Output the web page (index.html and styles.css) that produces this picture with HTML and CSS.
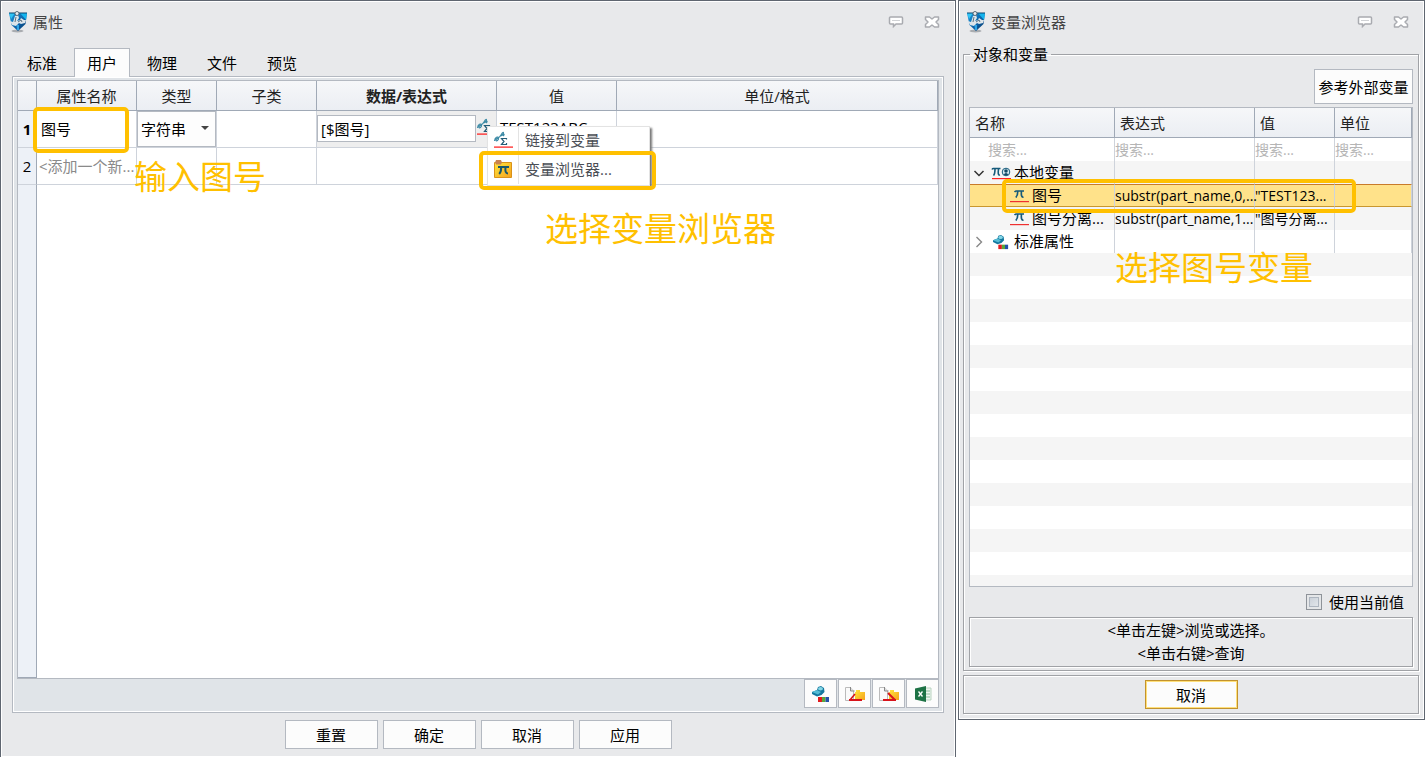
FILE: index.html
```html
<!DOCTYPE html>
<html lang="zh-CN">
<head>
<meta charset="utf-8">
<title>属性</title>
<link rel="stylesheet" href="styles.css">
</head>
<body>
<svg class="sprite" width="0" height="0" aria-hidden="true">
  <defs>
    <linearGradient id="blue" x1="0" y1="0" x2="1" y2="1">
      <stop offset="0" stop-color="#1d9be0"/><stop offset=".6" stop-color="#0b5fa5"/><stop offset="1" stop-color="#0a2f57"/>
    </linearGradient>
    <linearGradient id="gold" x1="0" y1="0" x2="1" y2="1">
      <stop offset="0" stop-color="#ffe63c"/><stop offset="1" stop-color="#f5a21c"/>
    </linearGradient>
    <symbol id="app" viewBox="0 0 20 22">
      <ellipse cx="9.500" cy="20" rx="6" ry="1.500" fill="#a9acb0"/>
      <path d="M1 2h18l-1.500 11L10 20 3.500 14z" fill="url(#blue)"/>
      <path d="M1 2h6L3 8z" fill="#2fc4f5"/><path d="M12 2h7l-1 7z" fill="#12b4ee"/>
      <path d="M1 2h18" fill="none" stroke="#0a4673" stroke-width="1"/>
      <path d="M7 5l3-1 1 3-2 3 3-1 1-2 3 2h2l-1 3-4 1-2-1-3 3-4-1-2-4 3 1z" fill="#dde5ea"/>
      <path d="M8 6l-1 5M10 11l3-2 1 2" fill="none" stroke="#5d7382" stroke-width="1"/>
      <circle cx="9" cy="2.500" r="2" fill="#e7ecef" stroke="#5b6b77"/>
      <path d="M8.500 14h2.500v5H9z" fill="#2fa5e6"/>
    </symbol>
    <symbol id="bubble" viewBox="0 0 16 12">
      <path d="M2.500 1h11a1 1 0 0 1 1 1v5a1 1 0 0 1-1 1H8L5.500 10.500V8h-3a1 1 0 0 1-1-1V2a1 1 0 0 1 1-1z" fill="#fff" stroke="#a9abb0" stroke-width="1.500"/>
      <path d="M4 4.500h8" stroke="#d0d2d5"/>
    </symbol>
    <symbol id="close" viewBox="0 0 16 12">
      <path d="M1.500 1h4L8 3l2.500-2h4v2.500L12 6l2.500 2.500V11h-4L8 9l-2.500 2h-4V8.500L4 6 1.500 3.500z" fill="#fff" stroke="#a9abb0" stroke-width="1.500" stroke-linejoin="round"/>
    </symbol>
    <symbol id="link" viewBox="0 0 20 18">
      <path d="M1.500 10C2 6 5 5 5.500 7S3 11 3 9s3-1 5-5 3-3 2-1-3 2-1 1 3-1 1 1" fill="none" stroke="#3d8ba6" stroke-width="1.200"/>
      <path d="M13.500 8.500v-1H8.500l2.500 3-2.500 3h5v-1.500" fill="none" stroke="#245d78" stroke-width="1.200"/>
      <path d="M1 15.500h19v1.200H1z" fill="#ff1515"/>
    </symbol>
    <symbol id="browse" viewBox="0 0 20 20">
      <path d="M1.500 3.500h17v15h-17z" fill="url(#gold)" stroke="#d9921a"/>
      <path d="M3 1h5l1 2.500-1 2H3l-1-2z" fill="#c9834e"/>
      <path d="M5 8h11M8.200 8c0 4-.5 5.500-2 7M12.500 8c-.4 4 0 6.500 2.500 6.500" fill="none" stroke="#17576b" stroke-width="2"/>
    </symbol>
    <symbol id="pi" viewBox="0 0 20 16">
      <path d="M5.500 4q1-1 2-1h7.500M8.800 3c0 4-.5 5-2 6.500M12.500 3c-.5 4 0 6.500 2 6" fill="none" stroke="#155a7a" stroke-width="1.700"/>
      <path d="M1 13h19v1.200H1z" fill="#ee3030"/>
    </symbol>
    <symbol id="piuser" viewBox="0 0 20 16">
      <path d="M1 4.500q.5-1 1.500-1h7M4 4c0 4 0 5-1.500 6.500M7.500 4c-.5 4-.5 6.500 1.500 6" fill="none" stroke="#155a7a" stroke-width="1.600"/>
      <circle cx="15" cy="7" r="3.800" fill="#d9edf2" stroke="#155a7a"/>
      <circle cx="15" cy="6" r="1.800" fill="#124a66"/><path d="M12.500 9.500q2.500-3 5 0l-2.500 1z" fill="#124a66"/>
      <path d="M1 13h19v1.200H1z" fill="#ff2222"/>
    </symbol>
    <symbol id="part" viewBox="0 0 20 18">
      <path d="M1 7l5-2 1-3 3-1 3 2 .5 4-3 3-4.500 1.500L1 9z" fill="#14789f"/>
      <path d="M1 7l5-2 4 2-3 2.500z" fill="#54bbd4"/><ellipse cx="9.500" cy="3.800" rx="2.500" ry="1.800" fill="#86d7e6"/>
      <path d="M7 12h4v5H7z" fill="#e3191c"/><path d="M11 12h3.500v5H11z" fill="#5aa63a"/><path d="M14.500 12H18v5h-3.500z" fill="#2450a8"/>
    </symbol>
    <symbol id="export" viewBox="0 0 22 18">
      <path d="M1.500 2.500h5l3 3v10h-8z" fill="#fafafa" stroke="#bbb"/><path d="M6.500 2v4h4" fill="#ddd" stroke="#888"/>
      <path d="M11 7h1V5h4v2h5v8H11z" fill="url(#gold)"/>
      <path d="M6 15l5-6" fill="none" stroke="#d8131b" stroke-width="1.600"/><path d="M5 14h13v2H5z" fill="#d8131b"/>
    </symbol>
    <symbol id="import" viewBox="0 0 22 18">
      <path d="M1.500 2.500h5l3 3v10h-8z" fill="#fafafa" stroke="#bbb"/><path d="M6.500 2v4h4" fill="#ddd" stroke="#888"/>
      <path d="M11 7h1V5h4v2h5v8H11z" fill="url(#gold)"/>
      <path d="M10 8l7 7" fill="none" stroke="#d8131b" stroke-width="2"/><path d="M5 14h13v2H5z" fill="#d8131b"/>
    </symbol>
    <symbol id="sheet" viewBox="0 0 18 18">
      <path d="M10 3h7v12h-7z" fill="#eef5ef" stroke="#b9d3c0"/><path d="M12 6h4M12 9h4M12 12h4" stroke="#8cbd9b"/>
      <path d="M1 3.500L12 1v16L1 14.500z" fill="#1d7245"/>
      <path d="M4.500 6.500l4 5m0-5l-4 5" stroke="#fff" stroke-width="1.300"/>
    </symbol>
    <symbol id="down" viewBox="0 0 12 12"><path d="M1.500 4L6 8.500 10.500 4" fill="none" stroke="#333" stroke-width="1.500"/></symbol>
    <symbol id="right" viewBox="0 0 12 12"><path d="M3.500 1L8.500 6l-5 5" fill="none" stroke="#888" stroke-width="1.400"/></symbol>
  </defs>
</svg>

<main class="desk">
  <section class="window props">
    <header class="titlebar">
      <svg class="app-icon"><use href="#app"/></svg>
      <h1>属性</h1>
      <button class="win-btn" aria-label="反馈"><svg><use href="#bubble"/></svg></button>
      <button class="win-btn" aria-label="关闭"><svg><use href="#close"/></svg></button>
    </header>
    <nav class="tabs" role="tablist">
      <button class="tab" role="tab">标准</button>
      <button class="tab active" role="tab" aria-selected="true">用户</button>
      <button class="tab" role="tab">物理</button>
      <button class="tab" role="tab">文件</button>
      <button class="tab" role="tab">预览</button>
    </nav>
    <div class="pane">
      <div class="grid-box">
        <table class="grid">
          <colgroup><col class="c-num"><col class="c-100"><col class="c-80"><col class="c-100"><col class="c-180"><col class="c-120"><col></colgroup>
          <thead><tr><th></th><th>属性名称</th><th>类型</th><th>子类</th><th class="strong">数据/表达式</th><th>值</th><th>单位/格式</th></tr></thead>
          <tbody>
            <tr>
              <th class="current">1</th>
              <td><input class="name-input" aria-label="属性名称" value="图号"></td>
              <td><div class="select-box"><select aria-label="类型"><option>字符串</option></select></div></td>
              <td></td>
              <td class="expr"><div class="expr-box"><input aria-label="表达式" value="[$图号]"><svg><use href="#link"/></svg></div></td>
              <td class="value">TEST123ABC</td>
              <td></td>
            </tr>
            <tr><th>2</th><td class="hint">&lt;添加一个新...</td><td></td><td></td><td></td><td></td><td></td></tr>
          </tbody>
        </table>
        <div class="gutter"></div>
      </div>
      <div class="tools">
        <button aria-label="标准属性"><svg><use href="#part"/></svg></button>
        <button aria-label="导出"><svg><use href="#export"/></svg></button>
        <button aria-label="导入"><svg><use href="#import"/></svg></button>
        <button aria-label="表格"><svg><use href="#sheet"/></svg></button>
      </div>
    </div>
    <footer class="actions">
      <button class="btn">重置</button><button class="btn">确定</button><button class="btn">取消</button><button class="btn">应用</button>
    </footer>

    <div class="menu" role="menu">
      <button role="menuitem"><span class="menu-icon"><svg><use href="#link"/></svg></span>链接到变量</button>
      <button role="menuitem"><span class="menu-icon"><svg><use href="#browse"/></svg></span>变量浏览器...</button>
    </div>
    <div class="mark mark-name"></div>
    <div class="mark mark-menu"></div>
    <p class="note note-name">输入图号</p>
    <p class="note note-menu">选择变量浏览器</p>
  </section>

  <section class="window browser">
    <header class="titlebar">
      <svg class="app-icon"><use href="#app"/></svg>
      <h1>变量浏览器</h1>
      <button class="win-btn" aria-label="反馈"><svg><use href="#bubble"/></svg></button>
      <button class="win-btn" aria-label="关闭"><svg><use href="#close"/></svg></button>
    </header>
    <fieldset class="etched objects">
      <legend>对象和变量</legend>
      <div class="objects-body">
        <button class="btn ref-btn">参考外部变量</button>
        <div class="tree-box">
          <table class="tree">
            <colgroup><col class="t-name"><col class="t-expr"><col class="t-val"><col></colgroup>
            <thead><tr><th>名称</th><th>表达式</th><th>值</th><th>单位</th></tr></thead>
            <tbody>
              <tr class="search">
                <td><input class="indent" aria-label="搜索名称" placeholder="搜索..."></td>
                <td><input aria-label="搜索表达式" placeholder="搜索..."></td>
                <td><input aria-label="搜索值" placeholder="搜索..."></td>
                <td><input aria-label="搜索单位" placeholder="搜索..."></td>
              </tr>
              <tr><td><div class="node"><svg class="arrow"><use href="#down"/></svg><svg class="kind"><use href="#piuser"/></svg>本地变量</div></td><td></td><td></td><td></td></tr>
              <tr class="selected"><td><div class="node child"><svg class="kind"><use href="#pi"/></svg>图号</div></td><td>substr(part_name,0,...</td><td>"TEST123...</td><td></td></tr>
              <tr><td><div class="node child"><svg class="kind"><use href="#pi"/></svg>图号分离...</div></td><td>substr(part_name,1...</td><td>"图号分离...</td><td></td></tr>
              <tr><td><div class="node"><svg class="arrow"><use href="#right"/></svg><svg class="kind"><use href="#part"/></svg>标准属性</div></td><td></td><td></td><td></td></tr>
            </tbody>
          </table>
          <div class="stripes"></div>
        </div>
        <label class="check"><input type="checkbox">使用当前值</label>
        <div class="etched tips"><p>&lt;单击左键&gt;浏览或选择。</p><p>&lt;单击右键&gt;查询</p></div>
      </div>
    </fieldset>
    <footer class="etched cancel-bar"><button class="btn focus">取消</button></footer>

    <div class="mark mark-row"></div>
    <p class="note note-row">选择图号变量</p>
  </section>
</main>
</body>
</html>
```

FILE: styles.css
```css
* { box-sizing: border-box; }
body, h1, p, fieldset { margin: 0; }
body {
  background: #fff;
  color: #000;
  font: 15px/22px "Open Sans", "Noto Sans CJK SC", sans-serif;
}
button, input, select { font: inherit; color: inherit; margin: 0; border-radius: 0; }
button { padding: 0; border: 0; background: none; }
svg { display: block; flex: none; }
.sprite { position: absolute; }

.desk {
  display: grid;
  grid-template-columns: minmax(0, 956fr) minmax(0, 467fr);
  gap: 2px;
  height: 100vh;
  min-height: 480px;
  overflow: hidden;
}
.window {
  position: relative;
  display: flex;
  flex-direction: column;
  min-width: 0;
  background: #e8e9eb;
  border: 1px solid #5f6670;
  box-shadow: inset 0 0 0 1px #fff;
}
.props { border-bottom: 0; padding: 0 11px 8px; }
.browser { margin-bottom: 37px; padding: 0 4px 5px; }

.titlebar { display: flex; align-items: center; height: 42px; color: #444; }
.props .titlebar { margin: 0 4px 0 -4px; }
.browser .titlebar { margin: 0 11px 0 3px; }
.titlebar h1 { flex: 1; font-size: 15px; font-weight: 400; }
.app-icon { width: 20px; height: 22px; margin-right: 5px; }
.win-btn { margin-left: 20px; }
.win-btn svg { width: 16px; height: 12px; }

.tabs { display: flex; gap: 4px; padding: 5px 2px 0; }
.tab { width: 56px; height: 28px; border: 1px solid transparent; border-bottom: 0; }
.tab.active { position: relative; z-index: 1; margin-bottom: -1px; height: 29px; background: #fcfcfc; border-color: #b4b9c1; }

.pane {
  flex: 1;
  min-height: 0;
  display: flex;
  flex-direction: column;
  padding: 3px 4px 4px;
  background: #e0e4e8;
  border: 1px solid #b4b9c1;
  box-shadow: inset 0 0 0 1px #fff;
}
.grid-box {
  flex: 1;
  min-height: 0;
  display: flex;
  flex-direction: column;
  background: #fff;
  border: 1px solid #b4b9c1;
}
table { border-spacing: 0; table-layout: fixed; width: 100%; }
th, td { padding: 0; font-weight: 400; white-space: nowrap; }
.c-num { width: 19px; }
.c-80 { width: 80px; }
.c-100 { width: 100px; }
.c-120 { width: 120px; }
.c-180 { width: 180px; }
.grid tr { height: 37px; }
.grid thead tr { height: 30px; }
.grid th, .grid td { overflow: hidden; }
.grid td { border-right: 1px solid #ced3db; border-bottom: 1px solid #ced3db; }
.grid th { color: #000; border-right: 1px solid #a0a9b6; border-bottom: 1px solid #a0a9b6; }
.grid thead th, .tree th { background: linear-gradient(#f6f7f9, #ebeef3); color: #222; }
.grid tbody th { background: #edf1f7; border-bottom-color: #ced3db; }
.grid .strong, .grid .current { font-weight: 700; }
.grid td.hint { padding-left: 2px; color: #8a8a8a; }
.grid td.value { padding: 0 0 4px 3px; }
.gutter { flex: 1; width: 19px; background: #edf1f7; border-right: 1px solid #a0a9b6; border-bottom: 1px solid #a0a9b6; }
.name-input { width: 99px; height: 35px; padding: 0 4px 2px; border: 0; display: block; }
.select-box { position: relative; }
.select-box select { display: block; width: 100%; height: 36px; padding: 0 3px 1px; appearance: none; background: #fdfdfd; border: 1px solid #b4b9c1; }
.select-box::after { content: ""; position: absolute; right: 7px; top: 15px; border: 4px solid transparent; border-top-color: #444; border-bottom: 0; }
.grid td.expr { background: #eee; }
.expr-box { display: flex; align-items: center; padding-bottom: 2px; }
.expr-box input { width: 159px; height: 27px; padding: 0 3px; background: #fff; border: 1px solid #b4b9c1; }
.expr-box svg { width: 20px; height: 18px; margin-bottom: 2px; }

.tools { display: flex; justify-content: flex-end; gap: 1px; }
.tools button { width: 33px; height: 29px; display: grid; place-items: center; background: #fcfcfc; border: 1px solid #b4b9c1; }
.tools svg { width: 22px; height: 18px; }

.btn { width: 93px; height: 29px; background: #fcfcfc; border: 1px solid #b4b9c1; }
.actions { display: flex; justify-content: center; gap: 5px; padding-top: 7px; }

.etched { border: 1px solid #a0a2a6; box-shadow: inset 1px 1px #fff, 1px 1px #fff; }
.objects { flex: 1; min-height: 0; min-width: 0; margin-right: 1px; padding: 0 5px 3px; display: flex; flex-direction: column; }
.objects legend { margin-left: 1px; padding: 0 3px; }
.objects-body { height: 100%; display: flex; flex-direction: column; }
.ref-btn { align-self: flex-end; flex: none; width: 99px; height: 35px; margin: 4px 0 3px; }
.tree-box { flex: 1; min-height: 0; display: flex; flex-direction: column; background: #fff; border: 1px solid #b4b9c1; }
.t-name { width: 145px; }
.t-expr { width: 140px; }
.t-val { width: 80px; }
.tree th { height: 30px; padding-left: 5px; text-align: left; border-right: 1px solid #a0a9b6; border-bottom: 1px solid #a0a9b6; }
.tree td { height: 23px; line-height: 21px; font-size: 14px; border-right: 1px solid #ced3db; }
.tree tbody tr:nth-child(even) { background: #f5f5f5; }
.tree .selected td { background: #ffe28a; border-top: 1px solid #c87a2a; border-bottom: 1px solid #c9972f; }
.tree input { display: block; width: 100%; height: 22px; padding: 0; border: 0; background: none; }
.tree .indent { padding-left: 18px; }
.tree input::placeholder { color: #b5b5b5; opacity: 1; }
.node { display: flex; align-items: center; padding-left: 3px; font-size: 15px; height: 21px; }
.node .arrow { width: 12px; height: 12px; margin-right: 6px; }
.node .kind { width: 20px; height: 16px; margin-right: 3px; }
.node.child { padding-left: 39px; }
.stripes { flex: 1; background: repeating-linear-gradient(#f5f5f5 0 23px, #fff 23px 46px); }
.check { display: flex; align-items: center; gap: 7px; align-self: flex-end; height: 30px; padding-right: 9px; }
.check input { appearance: none; width: 16px; height: 16px; background: linear-gradient(135deg, #c3cad3, #e9edf0); border: 1px solid #8e9399; box-shadow: inset 0 0 0 2px #e4e6e8, inset 0 0 0 3px #adb5bf; }
.tips { padding: 1px 0; text-align: center; line-height: 23px; }
.cancel-bar { display: flex; justify-content: center; margin: 4px 1px 0 0; padding: 4px; }
.focus { border-color: #c2922e; box-shadow: inset 0 0 0 1px #ffe07a; }

.menu { position: absolute; left: 486px; top: 125px; width: 163px; background: #fff; border: 1px solid #e3e3e3; box-shadow: 2px 2px 2px #777; }
.menu button { display: flex; align-items: center; width: 100%; height: 29px; padding-bottom: 3px; color: #4a4e55; }
.menu-icon { display: flex; align-items: center; width: 31px; height: 29px; padding-left: 5px; margin-right: 6px; border-right: 1px solid #e3e3e3; }
.menu svg { width: 20px; height: 20px; }

.mark { position: absolute; border: 4px solid #ffc000; border-radius: 5px; pointer-events: none; }
.mark-name { left: 32px; top: 106px; width: 96px; height: 46px; }
.mark-menu { left: 478px; top: 150px; width: 177px; height: 39px; }
.mark-row { left: 43px; top: 178px; width: 354px; height: 34px; }
.note { position: absolute; color: #ffc000; font-size: 33px; line-height: 40px; white-space: nowrap; }
.note-name { left: 133px; top: 156px; }
.note-menu { left: 544px; top: 208px; }
.note-row { left: 156px; top: 247px; }
```
